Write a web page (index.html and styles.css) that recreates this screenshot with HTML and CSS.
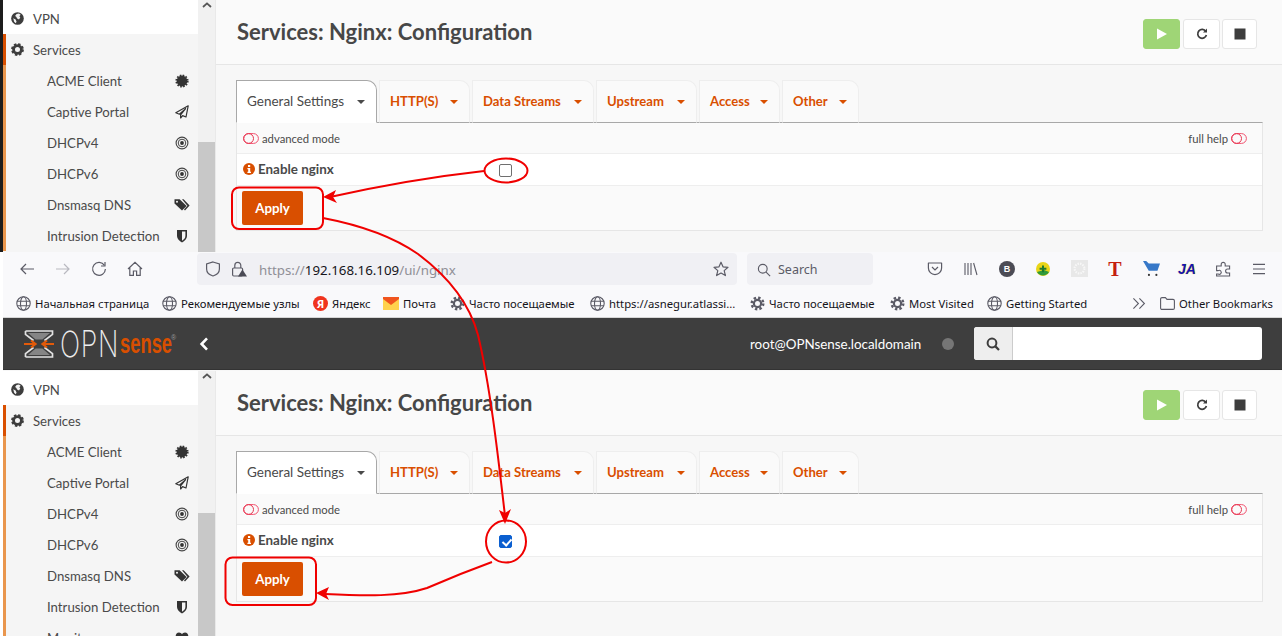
FILE: index.html
```html
<!DOCTYPE html>
<html lang="en">
<head>
<meta charset="utf-8">
<title>Services: Nginx: Configuration</title>
<link rel="stylesheet" href="styles.css">
</head>
<body>
<svg class="defs" width="0" height="0" aria-hidden="true">
  <defs>
    <symbol id="i-globe" viewBox="0 0 14 14"><circle cx="7" cy="7" r="6.8" fill="#3d3d3d"/><path d="M6 2.2 8.6 1.6 10.4 3 9 4.6 10 6 8.6 8 6.6 7 5.6 5 4.4 4.4zM2.4 6.6 5 8.2 6 10.6 5 12 3.4 10.4z" fill="#f2f2f2"/></symbol>
    <symbol id="i-gear" viewBox="0 0 14 14"><circle cx="7" cy="7" r="4.2" fill="none" stroke="#3d3d3d" stroke-width="3"/><circle cx="7" cy="7" r="5.8" fill="none" stroke="#3d3d3d" stroke-width="2.2" stroke-dasharray="2.6 1.95"/></symbol>
    <symbol id="i-cert" viewBox="0 0 14 14"><circle cx="7" cy="7" r="5.4" fill="#333"/><circle cx="7" cy="7" r="5.8" fill="none" stroke="#333" stroke-width="1.6" stroke-dasharray="1.6 1.44"/></symbol>
    <symbol id="i-plane" viewBox="0 0 14 14"><path d="M13.2 .8 .8 7.8 4.4 9.2 10.6 3.6 5.6 9.8 5.6 13 7.6 10.6 11 12z" fill="none" stroke="#333" stroke-width="1.2" stroke-linejoin="round"/></symbol>
    <symbol id="i-target" viewBox="0 0 14 14"><circle cx="7" cy="7" r="5.9" fill="none" stroke="#444" stroke-width="1.1"/><circle cx="7" cy="7" r="3.8" fill="none" stroke="#444" stroke-width="1"/><circle cx="7" cy="7" r="1.9" fill="#333"/></symbol>
    <symbol id="i-tags" viewBox="0 0 16 14"><path d="M.5 1.2 5.6 1.2 12.6 8 8 12.6 .5 5.6z" fill="#333"/><path d="M8 1.2 9.6 1.2 15.6 7.6 11 12.6 10 11.6 13.4 7.8z" fill="#333"/><circle cx="3" cy="3.7" r="1" fill="#f5f5f5"/></symbol>
    <symbol id="i-shield" viewBox="0 0 14 14"><path d="M2 1H12V7C12 10 9.6 12.2 7 13.4 4.4 12.2 2 10 2 7z" fill="#333"/><path d="M7 2.6H10.4V7C10.4 9 8.8 10.8 7 11.7z" fill="#f5f5f5"/></symbol>
    <symbol id="i-heart" viewBox="0 0 14 14"><path d="M7 13 1.4 7.2C-.4 4.6 1.4 1.4 4 1.4 5.4 1.4 6.4 2.2 7 3.2 7.6 2.2 8.6 1.4 10 1.4 12.6 1.4 14.4 4.6 12.6 7.2z" fill="#333"/></symbol>
    <symbol id="i-toggle" viewBox="0 0 16 11"><rect x=".6" y=".6" width="14.8" height="9.8" rx="4.9" fill="none" stroke="#f0506e" stroke-width="1"/><circle cx="5.6" cy="5.5" r="4.9" fill="none" stroke="#e8344e" stroke-width="1"/></symbol>
    <symbol id="i-info" viewBox="0 0 12 12"><circle cx="6" cy="6" r="6" fill="#d94f00"/><rect x="5" y="2" width="2.2" height="2" fill="#fff"/><path d="M4.4 5H7.2V8.8H8V10H4.4V8.8H5.2V6.2H4.4z" fill="#fff"/></symbol>
    <symbol id="i-web" viewBox="0 0 15 15"><g fill="none" stroke="#5b5b66" stroke-width="1.1"><circle cx="7.5" cy="7.5" r="6.7"/><ellipse cx="7.5" cy="7.5" rx="3" ry="6.7"/><path d="M1 5.2H14M1 9.8H14"/></g></symbol>
    <symbol id="i-ffgear" viewBox="0 0 15 15"><circle cx="7.5" cy="7.5" r="3.6" fill="none" stroke="#5b5b66" stroke-width="2.2"/><circle cx="7.5" cy="7.5" r="5.8" fill="none" stroke="#5b5b66" stroke-width="2.4" stroke-dasharray="2.4 2.15"/></symbol>
  </defs>
</svg>

<div class="page">
  <section class="app app-top">
    <nav class="sidebar">
      <div class="nav-row nav-vpn"><svg class="nav-ico"><use href="#i-globe"/></svg><span>VPN</span></div>
      <div class="nav-row nav-services"><svg class="nav-ico"><use href="#i-gear"/></svg><span>Services</span></div>
      <div class="nav-row nav-sub"><span>ACME Client</span><svg class="sub-ico"><use href="#i-cert"/></svg></div>
      <div class="nav-row nav-sub"><span>Captive Portal</span><svg class="sub-ico"><use href="#i-plane"/></svg></div>
      <div class="nav-row nav-sub"><span>DHCPv4</span><svg class="sub-ico"><use href="#i-target"/></svg></div>
      <div class="nav-row nav-sub"><span>DHCPv6</span><svg class="sub-ico"><use href="#i-target"/></svg></div>
      <div class="nav-row nav-sub"><span>Dnsmasq DNS</span><svg class="sub-ico tag-ico"><use href="#i-tags"/></svg></div>
      <div class="nav-row nav-sub"><span>Intrusion Detection</span><svg class="sub-ico"><use href="#i-shield"/></svg></div>
    </nav>
    <div class="scroll"><svg class="scroll-arrow" viewBox="0 0 10 6"><path d="M1 5 5 1.4 9 5" fill="none" stroke="#555" stroke-width="1.8"/></svg><div class="scroll-thumb"></div></div>
    <main class="content">
      <header class="title-bar">
        <h1>Services: Nginx: Configuration</h1>
        <div class="svc-btns">
          <span class="svc svc-go"><svg viewBox="0 0 12 12"><path d="M1 .6 11 6 1 11.400z" fill="#fff"/></svg></span>
          <span class="svc"><svg viewBox="0 0 12 12"><path d="M9.8 3.4A4.4 4.4 0 1 0 10.4 7" fill="none" stroke="#3d3d3d" stroke-width="1.7"/><path d="M7 4.4H11V.6z" fill="#3d3d3d"/></svg></span>
          <span class="svc svc-stop"><svg viewBox="0 0 12 12"><rect x=".5" y=".5" width="11" height="11" fill="#3d3d3d"/></svg></span>
        </div>
      </header>
      <div class="tabs">
        <div class="tab tab-on">General Settings<i class="caret"></i></div>
        <div class="tab">HTTP(S)<i class="caret"></i></div>
        <div class="tab">Data Streams<i class="caret"></i></div>
        <div class="tab">Upstream<i class="caret"></i></div>
        <div class="tab">Access<i class="caret"></i></div>
        <div class="tab">Other<i class="caret"></i></div>
      </div>
      <div class="panel">
        <div class="panel-help">
          <span class="help"><svg class="toggle"><use href="#i-toggle"/></svg>advanced mode</span>
          <span class="help">full help<svg class="toggle"><use href="#i-toggle"/></svg></span>
        </div>
        <div class="panel-field">
          <label class="field-label"><svg class="info"><use href="#i-info"/></svg>Enable nginx</label>
          <input class="check" type="checkbox">
        </div>
        <div class="panel-foot"><button class="apply" type="button">Apply</button></div>
      </div>
    </main>
  </section>

  <div class="browser">
    <div class="toolbar">
      <span class="tb"><svg viewBox="0 0 16 16"><path d="M15 8H2M7 3 2 8 7 13" fill="none" stroke="#5b5b66" stroke-width="1.2"/></svg></span>
      <span class="tb"><svg viewBox="0 0 16 16"><path d="M1 8H14M9 3 14 8 9 13" fill="none" stroke="#b9b9c0" stroke-width="1.2"/></svg></span>
      <span class="tb"><svg viewBox="0 0 16 16"><path d="M13.4 4.4A6.4 6.4 0 1 0 14.4 8" fill="none" stroke="#5b5b66" stroke-width="1.2"/><path d="M14 1V5H10" fill="none" stroke="#5b5b66" stroke-width="1.2"/></svg></span>
      <span class="tb"><svg viewBox="0 0 16 16"><path d="M1 8 8 1.4 15 8M2.8 6.8V14.4H6.4V10H9.6V14.4H13.2V6.8" fill="none" stroke="#5b5b66" stroke-width="1.2"/></svg></span>
      <div class="url">
        <svg class="url-ico" viewBox="0 0 16 16"><path d="M8 1 14.4 3V8C14.4 11.4 11.4 14 8 15 4.6 14 1.6 11.400 1.6 8V3z" fill="none" stroke="#5b5b66" stroke-width="1.2"/></svg>
        <svg class="url-ico" viewBox="0 0 16 16"><rect x="1.6" y="7" width="10" height="8" rx="1.2" fill="none" stroke="#5b5b66" stroke-width="1.2"/><path d="M3.8 7V4.4a3 3 0 0 1 6 0V7" fill="none" stroke="#5b5b66" stroke-width="1.2"/><path d="M11.4 8.4 16 15.6H7z" fill="#4a4a55"/></svg>
        <span class="url-text"><span class="dim">https://</span>192.168.16.109<span class="dim">/ui/nginx</span></span>
        <svg class="url-star" viewBox="0 0 16 16"><path d="M8 1.2 10 5.8 15 6.3 11.2 9.6 12.4 14.6 8 12 3.6 14.6 4.8 9.6 1 6.3 6 5.8z" fill="none" stroke="#5b5b66" stroke-width="1.2" stroke-linejoin="round"/></svg>
      </div>
      <div class="search"><svg viewBox="0 0 16 16"><circle cx="6.6" cy="6.6" r="5" fill="none" stroke="#5b5b66" stroke-width="1.3"/><path d="M10.4 10.4 15 15" stroke="#5b5b66" stroke-width="1.3"/></svg><span>Search</span></div>
      <div class="addons">
        <span class="tb"><svg viewBox="0 0 16 16"><path d="M1.4 2H14.6V7A6.6 6.6 0 0 1 1.4 7z" fill="none" stroke="#5b5b66" stroke-width="1.2" stroke-linejoin="round"/><path d="M5 6 8 9 11 6" fill="none" stroke="#5b5b66" stroke-width="1.2"/></svg></span>
        <span class="tb"><svg viewBox="0 0 16 16"><path d="M2 2V14M5 2V14M8 2V14M10.6 2 14 14" fill="none" stroke="#5b5b66" stroke-width="1.1"/></svg></span>
        <span class="tb"><span class="badge-b">B</span></span>
        <span class="tb"><svg viewBox="0 0 16 16"><circle cx="8" cy="8" r="7" fill="#e9d518"/><path d="M2 11A7 7 0 0 0 14 11L9 9z" fill="#2f9a3a"/><path d="M8 4.4V11.2M4.6 7.8H11.4" stroke="#1f7a2c" stroke-width="2"/></svg></span>
        <span class="tb"><svg class="big" viewBox="0 0 16 16"><rect width="16" height="16" fill="#e8e8e8"/><circle cx="8" cy="8" r="4.6" fill="none" stroke="#f7f7f7" stroke-width="2" stroke-dasharray="1.4 1"/></svg></span>
        <span class="tb"><span class="badge-t">T</span></span>
        <span class="tb"><svg class="big" viewBox="0 0 16 16"><path d="M0 1H3L5.4 3.4H16L13.6 10H5.4z" fill="#3778c8"/><circle cx="5.6" cy="14" r="1" fill="#333"/><circle cx="12.6" cy="14" r="1" fill="#333"/></svg></span>
        <span class="tb"><span class="badge-ja">JA</span></span>
        <span class="tb"><svg viewBox="0 0 16 16"><path d="M1 5H5.4V3.4A2 2 0 1 1 9.4 3.4V5H14V9.6H12.4A2 2 0 1 0 12.4 13H14V15H1V12H3A2 2 0 1 0 3 8H1z" fill="none" stroke="#5b5b66" stroke-width="1.1" transform="translate(15.6 0) scale(-1 1)"/></svg></span>
        <span class="tb"><svg viewBox="0 0 16 16"><path d="M2 3.4H14M2 8H14M2 12.6H14" stroke="#5b5b66" stroke-width="1.2"/></svg></span>
      </div>
    </div>
    <div class="bookmarks">
      <span class="bm"><svg><use href="#i-web"/></svg>Начальная страница</span>
      <span class="bm"><svg><use href="#i-web"/></svg>Рекомендуемые узлы</span>
      <span class="bm"><span class="ya">Я</span>Яндекс</span>
      <span class="bm"><svg viewBox="0 0 16 13" class="mail"><rect width="16" height="13" fill="#ffd24d"/><path d="M0 0H16V2L8 8 0 2z" fill="#f0541e"/></svg>Почта</span>
      <span class="bm"><svg><use href="#i-ffgear"/></svg>Часто посещаемые</span>
      <span class="bm"><svg><use href="#i-web"/></svg>https://asnegur.atlassi...</span>
      <span class="bm"><svg><use href="#i-ffgear"/></svg>Часто посещаемые</span>
      <span class="bm"><svg><use href="#i-ffgear"/></svg>Most Visited</span>
      <span class="bm"><svg><use href="#i-web"/></svg>Getting Started</span>
      <span class="bm"><svg viewBox="0 0 15 15"><path d="M1.4 2.4 6.400 7.500 1.4 12.6M7.4 2.4 12.4 7.500 7.4 12.6" fill="none" stroke="#5b5b66" stroke-width="1.1"/></svg></span>
      <span class="bm"><svg viewBox="0 0 15 15"><path d="M.6 3A1.4 1.4 0 0 1 2 1.6H5.4L7 3.4H13A1.4 1.4 0 0 1 14.4 4.8V12A1.4 1.4 0 0 1 13 13.4H2A1.4 1.4 0 0 1 .6 12z" fill="none" stroke="#5b5b66" stroke-width="1.1"/></svg>Other Bookmarks</span>
    </div>
  </div>

  <header class="topbar">
    <div class="logo">
      <svg class="logo-mark" viewBox="0 0 30 28"><path d="M4 3H26L18.400 9.500H11.600zM11.600 18.500H18.400L26 25H4z" fill="#858585"/><path d="M1.500 1H28.500V4.400L20.500 10.500M9.500 10.500 1.500 4.400V1M1.500 27H28.500V23.600L20.500 17.500M9.500 17.500 1.500 23.600V27" fill="none" stroke="#e2e2e2" stroke-width="1.7"/><path d="M0 14H11M7 10.500 11.500 14 7 17.500M30 14H19M23 10.500 18.500 14 23 17.500" fill="none" stroke="#e25a0a" stroke-width="2.200"/></svg>
      <span class="logo-opn">OPN</span><span class="logo-sense">sense</span><span class="logo-reg">®</span>
    </div>
    <svg class="collapse" viewBox="0 0 10 14"><path d="M8 1.4 2.600 7 8 12.600" fill="none" stroke="#fff" stroke-width="2.600"/></svg>
    <span class="user">root@OPNsense.localdomain</span>
    <i class="status"></i>
    <div class="topsearch">
      <span class="ts-btn"><svg viewBox="0 0 14 14"><circle cx="6" cy="6" r="4.400" fill="none" stroke="#3d3d3d" stroke-width="2"/><path d="M9.400 9.400 13 13" stroke="#3d3d3d" stroke-width="2.200"/></svg></span>
      <span class="ts-field"></span>
    </div>
  </header>

  <section class="app app-bottom">
    <nav class="sidebar">
      <div class="nav-row nav-vpn"><svg class="nav-ico"><use href="#i-globe"/></svg><span>VPN</span></div>
      <div class="nav-row nav-services"><svg class="nav-ico"><use href="#i-gear"/></svg><span>Services</span></div>
      <div class="nav-row nav-sub"><span>ACME Client</span><svg class="sub-ico"><use href="#i-cert"/></svg></div>
      <div class="nav-row nav-sub"><span>Captive Portal</span><svg class="sub-ico"><use href="#i-plane"/></svg></div>
      <div class="nav-row nav-sub"><span>DHCPv4</span><svg class="sub-ico"><use href="#i-target"/></svg></div>
      <div class="nav-row nav-sub"><span>DHCPv6</span><svg class="sub-ico"><use href="#i-target"/></svg></div>
      <div class="nav-row nav-sub"><span>Dnsmasq DNS</span><svg class="sub-ico tag-ico"><use href="#i-tags"/></svg></div>
      <div class="nav-row nav-sub"><span>Intrusion Detection</span><svg class="sub-ico"><use href="#i-shield"/></svg></div>
      <div class="nav-row nav-sub"><span>Monitor</span><svg class="sub-ico"><use href="#i-heart"/></svg></div>
    </nav>
    <div class="scroll"><svg class="scroll-arrow" viewBox="0 0 10 6"><path d="M1 5 5 1.4 9 5" fill="none" stroke="#555" stroke-width="1.8"/></svg><div class="scroll-thumb"></div></div>
    <main class="content">
      <header class="title-bar">
        <h1>Services: Nginx: Configuration</h1>
        <div class="svc-btns">
          <span class="svc svc-go"><svg viewBox="0 0 12 12"><path d="M1 .6 11 6 1 11.400z" fill="#fff"/></svg></span>
          <span class="svc"><svg viewBox="0 0 12 12"><path d="M9.8 3.4A4.4 4.4 0 1 0 10.4 7" fill="none" stroke="#3d3d3d" stroke-width="1.7"/><path d="M7 4.4H11V.6z" fill="#3d3d3d"/></svg></span>
          <span class="svc svc-stop"><svg viewBox="0 0 12 12"><rect x=".5" y=".5" width="11" height="11" fill="#3d3d3d"/></svg></span>
        </div>
      </header>
      <div class="tabs">
        <div class="tab tab-on">General Settings<i class="caret"></i></div>
        <div class="tab">HTTP(S)<i class="caret"></i></div>
        <div class="tab">Data Streams<i class="caret"></i></div>
        <div class="tab">Upstream<i class="caret"></i></div>
        <div class="tab">Access<i class="caret"></i></div>
        <div class="tab">Other<i class="caret"></i></div>
      </div>
      <div class="panel">
        <div class="panel-help">
          <span class="help"><svg class="toggle"><use href="#i-toggle"/></svg>advanced mode</span>
          <span class="help">full help<svg class="toggle"><use href="#i-toggle"/></svg></span>
        </div>
        <div class="panel-field">
          <label class="field-label"><svg class="info"><use href="#i-info"/></svg>Enable nginx</label>
          <input class="check" type="checkbox" checked>
        </div>
        <div class="panel-foot"><button class="apply" type="button">Apply</button></div>
      </div>
    </main>
  </section>

  <svg class="marks" viewBox="0 0 1282 636" aria-hidden="true">
    <g fill="none" stroke="#f00000" stroke-width="2">
      <ellipse cx="506" cy="170.500" rx="21.500" ry="12"/>
      <rect x="232" y="187.500" width="91" height="41.500" rx="7"/>
      <path d="M484 171C430 177 375 187 330 197"/>
      <path d="M323 218C365 226 395 238 418 254C450 278 470 305 478 335C490 385 498 455 505 516"/>
      <ellipse cx="506" cy="541.500" rx="20" ry="21"/>
      <rect x="225.500" y="557.500" width="90.500" height="47.500" rx="7"/>
      <path d="M492 562C470 570 450 578 427 588C400 597 365 596 325 594"/>
    </g>
    <g fill="#f00000">
      <path d="M323 197 336 190 333 197 337 203z"/>
      <path d="M505 524 499 510 505 513 511 509z"/>
      <path d="M316 593 329 587 326 594 329 600z"/>
    </g>
  </svg>
</div>
</body>
</html>
```

FILE: styles.css
```css
* { box-sizing: border-box; }
html, body { margin: 0; padding: 0; }
body {
  width: 1284px;
  height: 638px;
  overflow: hidden;
  background: #fff;
  font-family: "Lato", "Noto Sans", sans-serif;
  color: #4a4a4a;
}
.defs { position: absolute; }
.page { position: relative; width: 1282px; height: 636px; overflow: hidden; }

/* application panes */
.app { display: flex; overflow: hidden; }
.app-top { height: 252px; background: #f7f7f7; border-left: 3px solid #1c1c1c; }
.app-bottom { height: 266px; background: #f7f7f7; border-left: 3px solid #fff; padding-top: 1px; }

.sidebar { width: 195px; flex: none; background: #f5f5f5; }
.nav-row {
  display: flex;
  align-items: center;
  height: 31px;
  font-size: 13.200px;
  color: #4a4a4a;
}
.nav-vpn { height: 34px; background: #fff; padding: 3px 0 0 8px; gap: 9px; }
.nav-services { background: #f5f5f5; border-left: 3px solid #d94f00; padding-left: 5px; gap: 9px; }
.nav-sub {
  justify-content: space-between;
  border-left: 3px solid #e9964d;
  padding: 0 9px 0 41px;
}
.nav-ico { width: 13px; height: 13px; flex: none; }
.sub-ico { width: 14px; height: 14px; flex: none; }
.tag-ico { width: 16px; margin-right: -1px; }

.scroll { width: 17px; flex: none; background: #f1f1f1; display: flex; flex-direction: column; align-items: center; }
.scroll-arrow { width: 10px; height: 6px; margin: 2px 0 134px; flex: none; }
.scroll-thumb { width: 100%; flex: 1; background: #c8c8c8; }

.content { flex: 1; min-width: 0; border-left: 1px solid #e9e9e9; }
.title-bar {
  height: 65px;
  display: flex;
  align-items: center;
  justify-content: space-between;
  padding: 0 25px 2px 21px;
  background: #fafafa;
  border-bottom: 1px solid #e6e6e6;
}
.title-bar h1 { margin: 0; font-size: 22px; font-weight: 700; color: #474747; }
.svc-btns { display: flex; gap: 3px; margin-top: 6px; }
.svc {
  width: 37px;
  height: 30px;
  display: flex;
  align-items: center;
  justify-content: center;
  background: #fff;
  border: 1px solid #e6e6e6;
  border-radius: 3px;
}
.svc svg { width: 12px; height: 12px; }
.svc-go { background: #9fd576; border-color: #9fd576; }
.svc-stop { width: 35px; margin-left: -1px; }

.tabs {
  display: grid;
  grid-template-columns: 141px 91px 122px 101px 81px 77px;
  gap: 2px;
  margin: 15px 0 0 20px;
  height: 42px;
}
.tab {
  display: flex;
  align-items: center;
  justify-content: space-between;
  padding: 0 11px 2px 10px;
  font-size: 13.100px;
  font-weight: 700;
  color: #d94f00;
  background: #fafafa;
  border: 1px solid #eeeeee;
  border-bottom: 1px solid #a8a8a8;
  border-radius: 0 10px 0 0;
}
.tab-on {
  font-weight: 400;
  font-size: 13.500px;
  color: #4a4a4a;
  background: #fff;
  border-color: #a8a8a8;
  border-bottom-color: #fff;
  height: 43px;
  position: relative;
  z-index: 1;
}
.caret {
  width: 0;
  height: 0;
  border-left: 4.500px solid transparent;
  border-right: 4.500px solid transparent;
  border-top: 4px solid currentColor;
  margin-top: 3px;
}

.panel {
  width: 1027px;
  margin-left: 20px;
  height: 109px;
  background: #fff;
  border: 1px solid #e6e6e6;
  border-top: 1px solid #a8a8a8;
}
.panel-help {
  height: 31px;
  display: flex;
  align-items: center;
  justify-content: space-between;
  padding: 0 15px 0 6px;
  background: #fafafa;
  border-bottom: 1px solid #eeeeee;
}
.help { display: flex; align-items: center; gap: 3px; font-size: 11.300px; color: #4a4a4a; }
.toggle { width: 16px; height: 11px; flex: none; }
.panel-field {
  height: 32px;
  display: flex;
  align-items: center;
  padding-left: 6px;
  border-bottom: 1px solid #eeeeee;
}
.field-label {
  width: 256px;
  flex: none;
  display: flex;
  align-items: center;
  gap: 3px;
  margin-top: -1px;
  font-size: 13.400px;
  font-weight: 700;
  color: #4a4a4a;
}
.info { width: 12px; height: 12px; flex: none; }
.check {
  appearance: none;
  position: relative;
  width: 13px;
  height: 13px;
  margin: 1px 0 0;
  background: #fff;
  border: 1px solid #6f6f6f;
  border-radius: 2px;
}
.check:checked { background: #0b5fd0; border-color: #0b5fd0; }
.check:checked::after {
  content: "";
  position: absolute;
  left: 3.500px;
  top: 1px;
  width: 4px;
  height: 7px;
  border: solid #fff;
  border-width: 0 2px 2px 0;
  transform: rotate(42deg);
}
.panel-foot { height: 44px; padding: 5px 0 0 5px; background: #fafafa; }
.apply {
  width: 61px;
  height: 34px;
  border: 0;
  border-radius: 2px;
  background: #d94f00;
  color: #fff;
  font: 700 13.300px "Lato", "Noto Sans", sans-serif;
}

/* browser chrome */
.browser { border-left: 3px solid #fff; background: #f9f9fb; height: 66px; }
.toolbar { height: 33px; display: flex; align-items: center; padding-left: 6px; }
.tb { width: 36px; height: 33px; flex: none; display: flex; align-items: center; justify-content: center; }
.tb svg { width: 16px; height: 16px; }
.tb svg.big { width: 17px; height: 17px; }
.url {
  width: 540px;
  height: 32px;
  margin-left: 44px;
  display: flex;
  align-items: center;
  gap: 10px;
  padding: 0 8px 0 8px;
  background: #f0f0f4;
  border-radius: 4px;
}
.url-ico { width: 16px; height: 16px; flex: none; }
.url-text { flex: 1; margin: 2px 0 0 2px; font: 13.300px "Noto Sans", sans-serif; color: #15141a; }
.dim { color: #8f8f96; }
.url-star { width: 16px; height: 16px; flex: none; }
.search {
  width: 126px;
  height: 32px;
  margin-left: 10px;
  display: flex;
  align-items: center;
  gap: 7px;
  padding: 2px 0 0 10px;
  background: #f0f0f4;
  border-radius: 4px;
  font: 12.500px "Noto Sans", sans-serif;
  color: #5b5b66;
}
.search svg { width: 14px; height: 14px; }
.addons { display: flex; margin-left: 44px; }
.badge-b {
  width: 16px; height: 16px; border-radius: 50%;
  background: #4c4c55; color: #fff;
  font: 700 9px/16px "Liberation Sans", sans-serif; text-align: center;
}
.badge-t { font: 700 20px/1 "Liberation Serif", serif; color: #c4200e; }
.badge-ja { font: italic 700 14px/1 "Liberation Sans", sans-serif; color: #1414b4; text-shadow: 0 0 1px #e8c800; }
.bookmarks {
  height: 33px;
  display: grid;
  grid-template-columns: 146px 151px 70px 67px 140px 160px 140px 97px 145px 28px 1fr;
  align-items: center;
  padding: 4px 0 0 13px;
  border-bottom: 1px solid #d6d6d6;
}
.bm {
  display: flex;
  align-items: center;
  gap: 4px;
  font: 11.300px "Noto Sans", sans-serif;
  color: #15141a;
  white-space: nowrap;
}
.bm svg { width: 15px; height: 15px; flex: none; }
.bm svg.mail { width: 16px; height: 13px; }
.ya {
  width: 15px; height: 15px; border-radius: 50%;
  background: #f0341e; color: #fff;
  font: 700 11px/15px "Noto Sans", sans-serif; text-align: center;
}

/* OPNsense top bar */
.topbar {
  height: 52px;
  margin-left: 3px;
  display: flex;
  align-items: center;
  background: #3e3e3e;
  border-bottom: 1px solid #333;
  color: #fff;
}
.logo { position: relative; width: 151px; margin-left: 21px; display: flex; align-items: center; flex: none; }
.logo-mark { width: 30px; height: 28px; flex: none; }
.logo-opn {
  display: inline-block;
  width: 58px;
  margin: 0 0 0 6px;
  font: 200 36px/28px "Inter", "Lato", sans-serif;
  letter-spacing: 1px;
  color: #ececec;
  transform: scaleX(.74);
  transform-origin: left center;
}
.logo-sense {
  display: inline-block;
  width: 49px;
  margin: 1px 0 0 2px;
  font: 700 27px/28px "Liberation Sans", sans-serif;
  color: #d94f00;
  transform: scaleX(.68);
  transform-origin: left center;
}
.logo-reg { position: absolute; left: 147px; top: 5px; font: 7px/8px "Liberation Sans", sans-serif; color: #9a9a9a; }
.collapse { width: 10px; height: 14px; margin-left: 24px; flex: none; }
.user { margin-left: 541px; width: 172px; flex: none; font-size: 13.400px; white-space: nowrap; }
.status { width: 12px; height: 12px; margin-left: 20px; border-radius: 50%; background: #767676; flex: none; }
.topsearch { display: flex; height: 33px; width: 288px; margin-left: 20px; border-radius: 3px; overflow: hidden; background: #fff; }
.ts-btn { width: 39px; display: flex; align-items: center; justify-content: center; background: #eee; border-right: 1px solid #ccc; }
.ts-btn svg { width: 14px; height: 14px; }
.ts-field { flex: 1; }

/* red annotation overlay */
.marks { position: absolute; left: 0; top: 0; width: 1282px; height: 636px; pointer-events: none; }
```
